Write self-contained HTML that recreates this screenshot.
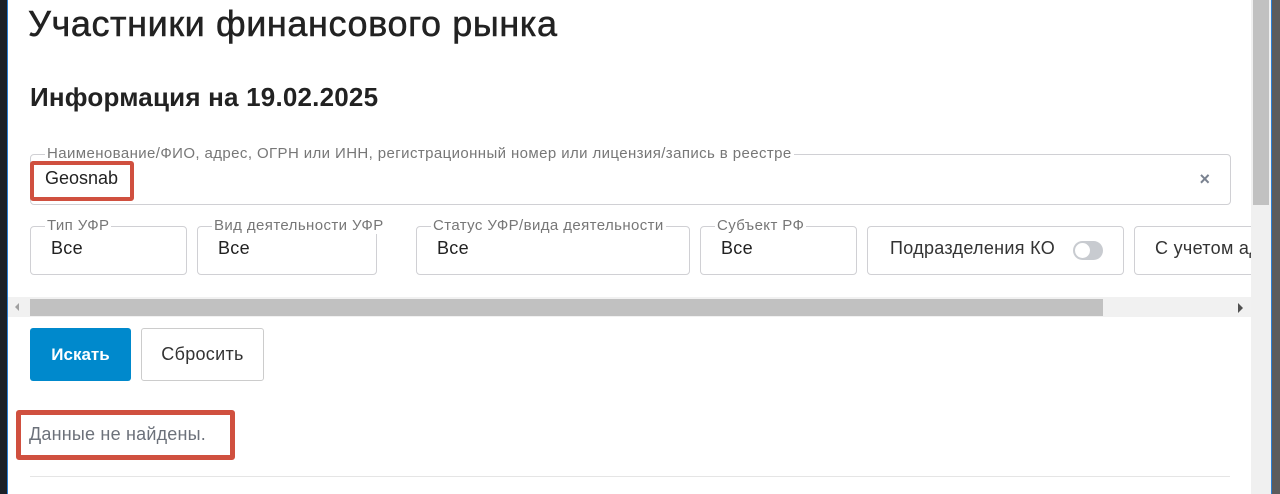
<!DOCTYPE html>
<html><head><meta charset="utf-8"><style>
*{box-sizing:border-box;margin:0;padding:0}
body{width:1280px;height:494px;overflow:hidden;background:#fff;font-family:"Liberation Sans",sans-serif;position:relative;color:#222}
.a{position:absolute}
.fs{position:absolute;border:1px solid #d0d0d4;border-radius:4px;background:#fff}
.lb{position:absolute;top:-10px;left:14px;background:#fff;padding:0 2px;font-size:15px;letter-spacing:0.4px;color:#777;white-space:nowrap;line-height:17px}
.v{position:absolute;left:20px;top:11px;font-size:18px;letter-spacing:0.3px;color:#222;white-space:nowrap}
</style></head><body>
<div class="a" style="left:0;top:0;width:7px;height:494px;background:#1c2128"></div>
<div class="a" style="left:7px;top:0;width:1px;height:494px;background:#2a7fd4"></div>

<div class="a" style="left:28px;top:3px;font-size:36px;white-space:nowrap;letter-spacing:0.6px;-webkit-text-stroke:0.5px #222">Участники финансового рынка</div>
<div class="a" style="left:30px;top:82px;font-size:26px;font-weight:bold;white-space:nowrap;letter-spacing:0.2px">Информация на 19.02.2025</div>

<div class="fs" style="left:30px;top:154px;width:1201px;height:51px">
<div class="lb">Наименование/ФИО, адрес, ОГРН или ИНН, регистрационный номер или лицензия/запись в реестре</div>
<div class="a" style="right:20px;top:14px;font-size:18px;color:#7a8290;font-weight:bold">×</div>
</div>
<div class="a" style="left:30px;top:161px;width:104px;height:40px;border:4px solid #d0503f;border-radius:3px"></div>
<div class="a" style="left:45px;top:168px;font-size:18px">Geosnab</div>

<div class="a" style="left:0;top:210px;width:1251px;height:80px;overflow:hidden">
<div class="fs" style="left:30px;top:16px;width:157px;height:49px"><div class="lb">Тип УФР</div><div class="v">Все</div></div>
<div class="fs" style="left:197px;top:16px;width:180px;height:49px"><div class="lb">Вид деятельности УФР</div><div class="v">Все</div></div>
<div class="fs" style="left:416px;top:16px;width:274px;height:49px"><div class="lb">Статус УФР/вида деятельности</div><div class="v">Все</div></div>
<div class="fs" style="left:700px;top:16px;width:157px;height:49px"><div class="lb">Субъект РФ</div><div class="v">Все</div></div>
<div class="fs" style="left:867px;top:16px;width:257px;height:49px"><div class="v" style="left:22px;color:#333">Подразделения КО</div>
<div class="a" style="left:205px;top:14px;width:30px;height:19px;border-radius:10px;background:#c8cbd0"></div>
<div class="a" style="left:207px;top:16px;width:15px;height:15px;border-radius:50%;background:#fff"></div></div>
<div class="fs" style="left:1134px;top:16px;width:160px;height:49px"><div class="v" style="left:20px;color:#333">С учетом адреса</div></div>
</div>

<div class="a" style="left:1251px;top:0;width:20px;height:494px;background:#f0f0f0"></div>
<div class="a" style="left:1253px;top:0;width:16px;height:205px;background:#c1c1c1"></div>
<div class="a" style="left:1271px;top:0;width:1px;height:494px;background:#2a7fd4"></div>
<div class="a" style="left:1272px;top:0;width:8px;height:494px;background:#5c5c5c"></div>

<div class="a" style="left:8px;top:297px;width:1243px;height:20px;background:#f1f1f1"></div>
<div class="a" style="left:30px;top:299px;width:1073px;height:17px;background:#c1c1c1"></div>
<div class="a" style="left:15px;top:303px;width:0;height:0;border-top:4px solid transparent;border-bottom:4px solid transparent;border-right:4px solid #a0a0a0"></div>
<div class="a" style="left:1238px;top:303px;width:0;height:0;border-top:5px solid transparent;border-bottom:5px solid transparent;border-left:5px solid #505050"></div>

<div class="a" style="left:30px;top:328px;width:101px;height:53px;background:#0089cc;border-radius:3px;color:#fff;font-weight:bold;font-size:17px;text-align:center;line-height:53px">Искать</div>
<div class="a" style="left:141px;top:328px;width:123px;height:53px;border:1px solid #ccc;border-radius:3px;font-size:18px;letter-spacing:0.3px;text-align:center;line-height:51px;color:#333">Сбросить</div>

<div class="a" style="left:16px;top:410px;width:219px;height:50px;border:5px solid #d0503f;border-radius:3px"></div>
<div class="a" style="left:29px;top:424px;font-size:18px;letter-spacing:0.2px;color:#6c717a">Данные не найдены.</div>
<div class="a" style="left:30px;top:476px;width:1200px;height:1px;background:#e5e5e5"></div>
</body></html>
